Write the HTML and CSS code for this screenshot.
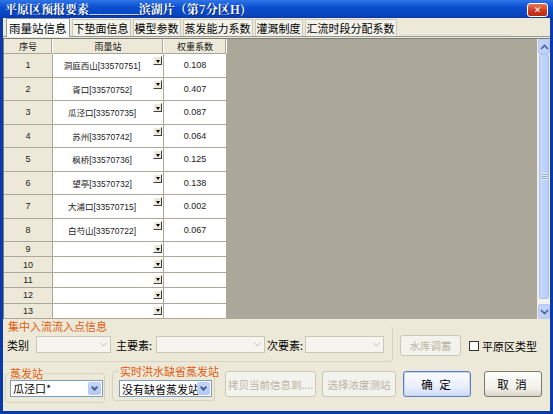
FILE: index.html
```html
<!DOCTYPE html>
<html>
<head>
<meta charset="utf-8">
<link rel="stylesheet" href="styles.css">
</head>
<body>
<div class="window">
  <div class="titlebar">
    <span class="title">平原区预报要素_______滨湖片（第7分区H)</span>
    <span class="close">✕</span>
  </div>
  <div class="client">
    <div class="tabs">
      <span class="tab active">雨量站信息</span>
      <span class="tab">下垫面信息</span>
      <span class="tab">模型参数</span>
      <span class="tab">蒸发能力系数</span>
      <span class="tab">灌溉制度</span>
      <span class="tab">汇流时段分配系数</span>
      <span class="tabline"></span>
    </div>
    <div class="gridwrap">
      <div class="grid">
        <div class="row head"><div class="c1">序号</div><div class="c2">雨量站</div><div class="c3">权重系数</div></div>
        <div class="row big"><div class="c1">1</div><div class="c2">洞庭西山[33570751]<i class="dd"></i></div><div class="c3">0.108</div></div>
        <div class="row big"><div class="c1">2</div><div class="c2">胥口[33570752]<i class="dd"></i></div><div class="c3">0.407</div></div>
        <div class="row big"><div class="c1">3</div><div class="c2">瓜泾口[33570735]<i class="dd"></i></div><div class="c3">0.087</div></div>
        <div class="row big"><div class="c1">4</div><div class="c2">苏州[33570742]<i class="dd"></i></div><div class="c3">0.064</div></div>
        <div class="row big"><div class="c1">5</div><div class="c2">枫桥[33570736]<i class="dd"></i></div><div class="c3">0.125</div></div>
        <div class="row big"><div class="c1">6</div><div class="c2">望亭[33570732]<i class="dd"></i></div><div class="c3">0.138</div></div>
        <div class="row big"><div class="c1">7</div><div class="c2">大浦口[33570715]<i class="dd"></i></div><div class="c3">0.002</div></div>
        <div class="row big"><div class="c1">8</div><div class="c2">白芍山[33570722]<i class="dd"></i></div><div class="c3">0.067</div></div>
        <div class="row small"><div class="c1">9</div><div class="c2"><i class="dd"></i></div><div class="c3"></div></div>
        <div class="row small"><div class="c1">10</div><div class="c2"><i class="dd"></i></div><div class="c3"></div></div>
        <div class="row small"><div class="c1">11</div><div class="c2"><i class="dd"></i></div><div class="c3"></div></div>
        <div class="row small"><div class="c1">12</div><div class="c2"><i class="dd"></i></div><div class="c3"></div></div>
        <div class="row small"><div class="c1">13</div><div class="c2"><i class="dd"></i></div><div class="c3"></div></div>
      </div>
      <div class="empty"></div>
      <div class="vscroll">
        <div class="sbtn up"><svg width="9" height="6" viewBox="0 0 9 6"><path d="M1 5 L4.5 1.5 L8 5" fill="none" stroke="#4d6185" stroke-width="1.6"/></svg></div>
        <div class="thumb"><span class="grip"></span></div>
        <div class="strack"></div>
        <div class="sbtn down"><svg width="9" height="6" viewBox="0 0 9 6"><path d="M1 1 L4.5 4.5 L8 1" fill="none" stroke="#4d6185" stroke-width="1.6"/></svg></div>
      </div>
    </div>
    <div class="bottom">
      <div class="line1">
        <fieldset class="group g1">
          <legend>集中入流流入点信息</legend>
          <div class="fields">
            <span class="lbl">类别</span>
            <span class="combo dis w75"><i class="arr"></i></span>
            <span class="lbl ml">主要素:</span>
            <span class="combo dis w108"><i class="arr"></i></span>
            <span class="lbl ml2">次要素:</span>
            <span class="combo dis w78"><i class="arr"></i></span>
          </div>
        </fieldset>
        <span class="btn dis b1">水库调蓄</span>
        <span class="chk"><i class="box"></i>平原区类型</span>
      </div>
      <div class="line2">
        <fieldset class="group g2">
          <legend>蒸发站</legend>
          <span class="combo en w93">瓜泾口*<i class="xarr"></i></span>
        </fieldset>
        <fieldset class="group g3">
          <legend>实时洪水缺省蒸发站</legend>
          <span class="combo en w92"><span class="ctext">没有缺省蒸发站!</span><i class="xarr"></i></span>
        </fieldset>
        <span class="btn dis b2">拷贝当前信息到....</span>
        <span class="btn dis b3">选择浓度测站</span>
        <span class="btn ok">确 定</span>
        <span class="btn cancel">取 消</span>
      </div>
    </div>
  </div>
</div>
</body>
</html>
```
FILE: styles.css
```css
* { box-sizing: border-box; }
html, body { margin: 0; padding: 0; }
body {
  width: 553px; height: 414px; overflow: hidden;
  font-family: "Noto Sans CJK SC", "DejaVu Sans", sans-serif;
  font-size: 11px; color: #000;
}
.window {
  width: 553px; height: 414px;
  display: flex; flex-direction: column;
  background: #0a3fb8;
  border-left: 3px solid #0a3aa8;
  border-right: 3px solid #0a3aa8;
  border-bottom: 3px solid #0a3aa8;
}
.titlebar {
  height: 18px; flex: none;
  margin: 0 -3px;
  background: linear-gradient(#2f75e6, #0a4fd0 40%, #0846c0 80%, #0a3aa8);
  display: flex; align-items: center; justify-content: space-between;
  padding: 0 5px 0 5px;
}
.title {
  color: #fff; font-weight: bold; font-size: 12px;
  font-family: "Noto Serif CJK SC", "Noto Sans CJK SC", serif;
  line-height: 18px;
  text-shadow: 1px 1px 0 #0a2a80;
}
.close {
  width: 21px; height: 14px; margin-top: 1px;
  background: linear-gradient(#e8765a, #c8381c 60%, #b82a10);
  border: 1px solid #fff; border-radius: 3px;
  color: #fff; font-size: 9px; font-weight: bold;
  display: flex; align-items: center; justify-content: center; line-height: 1;
}
.client {
  flex: 1; background: #ece9d8;
  display: flex; flex-direction: column;
}
.tabs {
  height: 19px; flex: none;
  display: flex; align-items: flex-end;
  padding-left: 3px;
  border-bottom: 1px solid #919b9c;
}
.tab {
  height: 17px; line-height: 16px;
  font-size: 11px; padding: 0 1px;
  background: #f3f2ea;
  border: 1px solid #c9c7ba; border-bottom: none;
  margin-right: 2px; color: #000;
  white-space: nowrap;
}
.tab.active {
  height: 19px; line-height: 18px;
  font-size: 11.5px;
  background: #fcfcfe;
  border-color: #919b9c;
  padding: 0 2px;
  margin-bottom: -1px;
}
.tabline {
  width: 110px; height: 2px; margin-bottom: 1px; margin-left: 2px;
  background: linear-gradient(#ffffff, #d0cec0);
}
.gridwrap {
  height: 281px; flex: none;
  margin-top: 1px;
  display: flex;
  border-top: 1px solid #7f7e76;
  border-left: 1px solid #7f7e76;
}
.grid { width: 223px; flex: none; display: flex; flex-direction: column; background: #fff; }
.row { display: flex; }
.row > div {
  border-right: 1px solid #aca899; border-bottom: 1px solid #aca899;
  display: flex; align-items: center; justify-content: center;
  font-family: "Liberation Sans", "Noto Sans CJK SC", sans-serif;
  font-size: 9px; position: relative; color: #222;
}
.row > div.c2 { font-size: 8.5px; }
.c1 { width: 49px; background: #ece9d8; }
.c2 { width: 111px; background: #fff; }
.c3 { width: 63px; background: #fff; }
.row.head { height: 15px; }
.row.head > div { background: #ece9d8; font-size: 9px; color: #111; border-right-color: #fff; box-shadow: inset -1px 0 0 #aca899; }
.row.big { height: 23.5px; }
.row.small { height: 15.4px; }
.row.small > div.c2 { justify-content: flex-end; }
.row.big > div.c2 { padding-right: 12px; }
.dd {
  position: absolute; right: 1px; top: 2px;
  width: 9px; height: 9px;
  background: #ece9d8;
  border-top: 1px solid #fff; border-left: 1px solid #fff;
  border-right: 1px solid #404040; border-bottom: 1px solid #404040;
}
.dd::after {
  content: ""; position: absolute; left: 1.5px; top: 2.5px;
  border-left: 2.5px solid transparent; border-right: 2.5px solid transparent;
  border-top: 3px solid #000;
}
.empty { flex: 1; background: #aca899; }
.vscroll {
  width: 13px; flex: none; background: #f3f1ec;
  display: flex; flex-direction: column;
  border-left: 1px solid #eeede5;
}
.sbtn {
  height: 15px; flex: none;
  background: linear-gradient(90deg, #c3d3fd, #bbcdf9);
  border: 1px solid #b5c8f4; border-radius: 2px;
  display: flex; align-items: center; justify-content: center;
}
.thumb {
  height: 245px; flex: none; margin: 0 1px;
  background: linear-gradient(90deg, #c9d8fc, #b8cdfb);
  border: 1px solid #a9c0f2; border-radius: 2px;
  display: flex; align-items: center; justify-content: center;
}
.grip { width: 5px; height: 7px; background: repeating-linear-gradient(#eef3ff 0 1px, #8aa5e0 1px 2px); }
.strack { flex: 1; }
.bottom { flex: 1; display: flex; flex-direction: column; padding: 1px 0 0 0; }
.group {
  border: 1px solid #d5d2c3; border-radius: 3px;
  margin: 0; padding: 0; min-width: 0;
}
.group legend {
  color: #e35a0e; font-size: 11px; padding: 0 0 0 1px; margin-left: -1px;
  line-height: 13px; white-space: nowrap;
}
.line1 { display: flex; align-items: flex-start; height: 43px; }
.g1 { width: 390px; height: 42px; border-color: transparent #d5d2c3 #d5d2c3 transparent; border-radius: 0 4px 4px 0; padding-left: 3px; }
.g1 legend { margin-left: 0; }
.fields { display: flex; align-items: center; margin-top: 3px; }
.lbl { font-size: 11px; line-height: 16px; }
.ml { margin-left: 5px; }
.ml2 { margin-left: 2px; }
.combo {
  height: 17px; display: inline-flex; align-items: center;
  position: relative; font-size: 11px;
  border: 1px solid #c9c7ba; background: #f5f4ef;
}
.w75 { width: 75px; margin-left: 7px; }
.w108 { width: 109px; margin-left: 4px; }
.w78 { width: 79px; margin-left: 2px; }
.arr { position: absolute; right: 3px; top: 5px; width: 6px; height: 4px; }
.arr::after {
  content: ""; position: absolute; left: 0; top: 0; width: 4px; height: 4px;
  border-right: 1px solid #c9c7ba; border-bottom: 1px solid #c9c7ba; transform: rotate(45deg) translate(-1px,-1px);
}
.btn {
  display: inline-flex; align-items: center; justify-content: center;
  border: 1px solid #c9c7ba; border-radius: 3px;
  font-size: 10.5px; white-space: nowrap;
}
.btn.dis { color: #b8b5a6; background: #f3f2ec; }
.b1 { width: 61px; height: 21px; margin: 15px 0 0 7px; }
.chk { display: inline-flex; align-items: center; font-size: 11px; margin: 15px 0 0 8px; height: 21px; }
.box { width: 10px; height: 10px; border: 1px solid #333; background: #fff; margin-right: 3px; }
.line2 { display: flex; align-items: flex-start; padding-left: 2px; }
.g2 { width: 100px; height: 36px; padding: 0 0 0 4px; margin-top: 4px; }
.g3 { width: 103px; height: 36px; padding: 0 0 0 6px; margin: 2px 0 0 7px; }
.g3 legend { margin-left: 0; }
.combo.en { background: #fff; border: 1px solid #7f9db9; font-size: 11px; padding-left: 2px; overflow: hidden; white-space: nowrap; }
.w93 { width: 93px; height: 17px; margin-top: -1px; }
.w92 { width: 93px; height: 17px; margin-top: 2px; }
.ctext { overflow: hidden; width: 78px; }
.xarr {
  position: absolute; right: 1px; top: 1px; width: 13px; height: 13px;
  background: linear-gradient(#c6d6fc, #b2c8f8); border-radius: 2px;
  border: 1px solid #b9cbf5;
}
.xarr::after {
  content: ""; position: absolute; left: 3px; top: 2px; width: 3px; height: 3px;
  border-right: 2px solid #4d6185; border-bottom: 2px solid #4d6185; transform: rotate(45deg);
}
.b2 { width: 91px; height: 26px; margin: 8px 0 0 10px; }
.b3 { width: 74px; height: 26px; margin: 8px 0 0 6px; }
.ok {
  width: 68px; height: 26px; margin: 8px 0 0 7px; font-size: 11.5px;
  background: linear-gradient(#fdfdfd, #e9eefc 60%, #cfdcf6);
  border: 1px solid #5b7dc6; box-shadow: inset 0 0 0 1px #c6d5f8;
  letter-spacing: 2px;
}
.cancel {
  width: 58px; height: 26px; margin: 8px 0 0 13px; font-size: 11.5px;
  background: linear-gradient(#fdfdfb, #f0efe8 70%, #d8d5c8);
  border: 1px solid #7a7868; letter-spacing: 2px;
}
```
